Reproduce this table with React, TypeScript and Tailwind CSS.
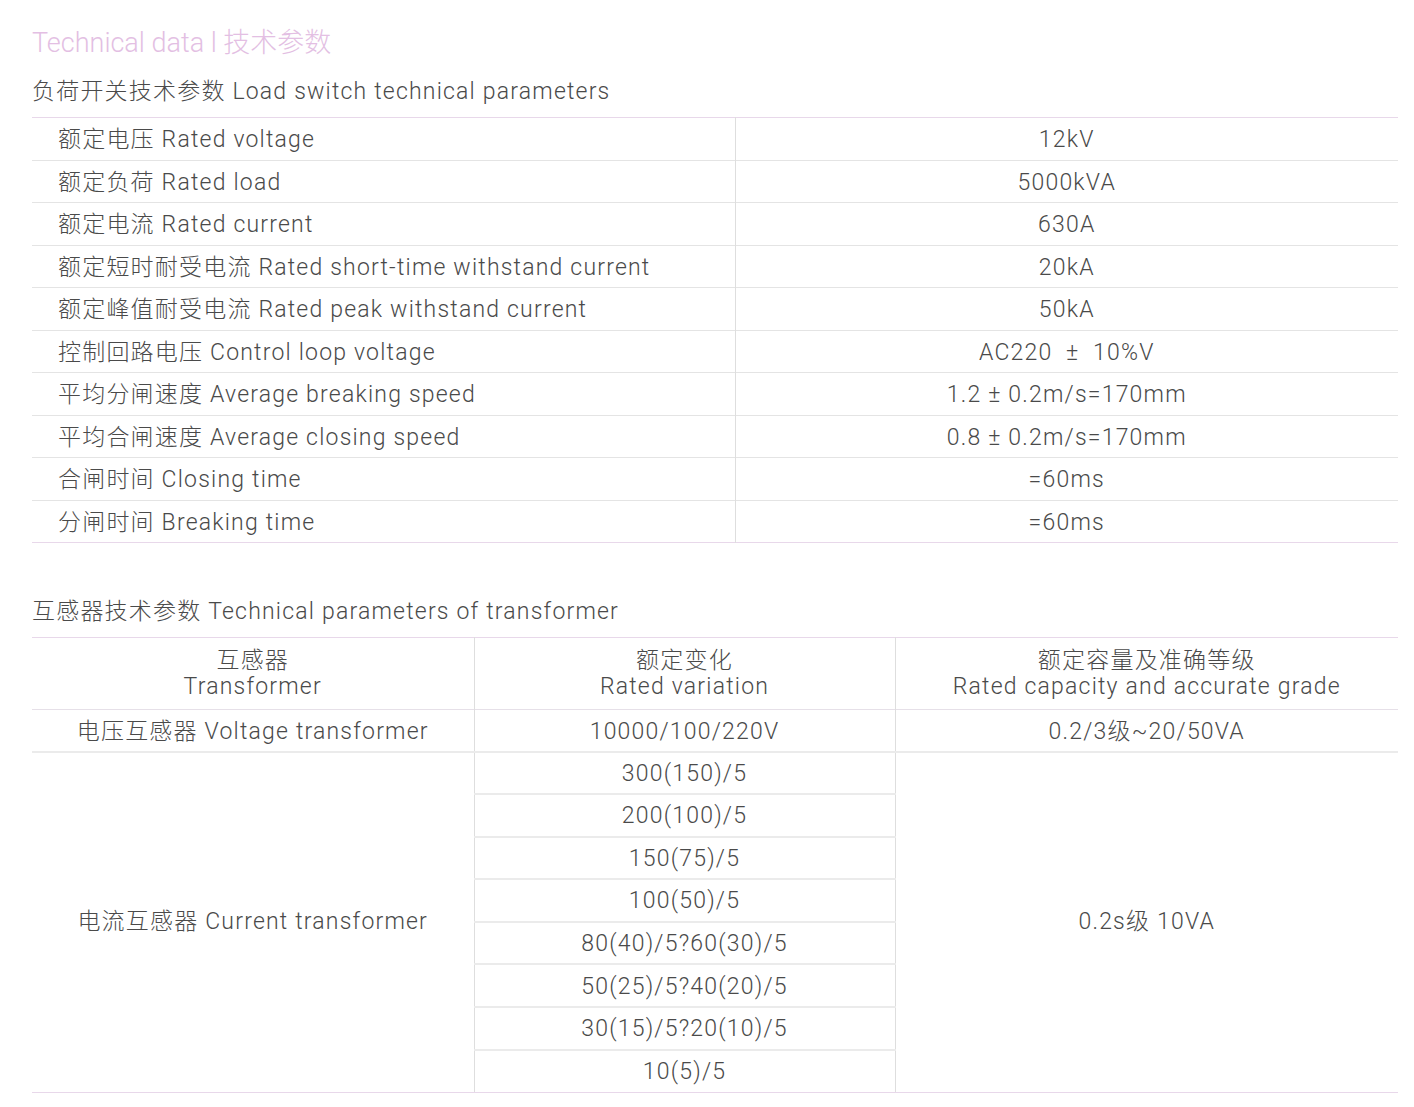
const font = "font-['Roboto','Noto_Sans_CJK_SC',sans-serif] font-light"

const loadRows: [string, string][] = [
  ["额定电压 Rated voltage", "12kV"],
  ["额定负荷 Rated load", "5000kVA"],
  ["额定电流 Rated current", "630A"],
  ["额定短时耐受电流 Rated short-time withstand current", "20kA"],
  ["额定峰值耐受电流 Rated peak withstand current", "50kA"],
  ["控制回路电压 Control loop voltage", "AC220\u00a0 ± \u00a010%V"],
  ["平均分闸速度 Average breaking speed", "1.2 ± 0.2m/s=170mm"],
  ["平均合闸速度 Average closing speed", "0.8 ± 0.2m/s=170mm"],
  ["合闸时间 Closing time", "=60ms"],
  ["分闸时间 Breaking time", "=60ms"],
]

const ratios = [
  "300(150)/5",
  "200(100)/5",
  "150(75)/5",
  "100(50)/5",
  "80(40)/5?60(30)/5",
  "50(25)/5?40(20)/5",
  "30(15)/5?20(10)/5",
  "10(5)/5",
]

export default function App() {
  return (
    <div className={`${font} bg-white min-h-screen text-[#4a4a4a] pl-8 pr-4 pt-[26px] pb-4`}>
      <h1 className="text-[27px] leading-[34px] text-[#e3bfe3]">Technical data l 技术参数</h1>

      <h2 className="text-[23px] tracking-[1.2px] leading-[34px] mt-[15px] mb-[8px]">
        负荷开关技术参数 Load switch technical parameters
      </h2>
      <table className="w-full border-collapse text-[23px] tracking-[1.2px]">
        <tbody>
          {loadRows.map(([label, value], i) => (
            <tr
              key={i}
              className={
                "h-[42.5px] " +
                (i === 0 ? "border-t border-t-[#e8d8ea] " : "") +
                (i === loadRows.length - 1 ? "border-b border-b-[#e8d8ea]" : "border-b border-b-[#e4e4e4]")
              }
            >
              <td className="w-[703px] pl-[26px] pt-[3px] border-r border-r-[#dedede]">{label}</td>
              <td className="text-center pt-[3px]">{value}</td>
            </tr>
          ))}
        </tbody>
      </table>

      <h2 className="text-[23px] tracking-[1.2px] leading-[34px] mt-[52px] mb-[8px]">
        互感器技术参数 Technical parameters of transformer
      </h2>
      <table className="w-full border-collapse text-[23px] tracking-[1.2px] text-center">
        <tbody>
          <tr className="h-[72px] border-t border-t-[#e8d8ea] border-b border-b-[#e6e0e8]">
            <td className="w-[442px] border-r border-r-[#dedede] leading-[26px]">
              互感器
              <br />
              Transformer
            </td>
            <td className="w-[421px] border-r border-r-[#dedede] leading-[26px]">
              额定变化
              <br />
              Rated variation
            </td>
            <td className="leading-[26px]">
              额定容量及准确等级
              <br />
              Rated capacity and accurate grade
            </td>
          </tr>
          <tr className="h-[42px] border-b-2 border-b-[#ebebeb]">
            <td className="border-r border-r-[#dedede] pt-[3px]">电压互感器 Voltage transformer</td>
            <td className="border-r border-r-[#dedede] pt-[3px]">10000/100/220V</td>
            <td className="pt-[3px]">0.2/3级~20/50VA</td>
          </tr>
          {ratios.map((r, i) => (
            <tr
              key={r}
              className={
                "h-[42.6px] " +
                (i === ratios.length - 1 ? "border-b border-b-[#e8d8ea]" : "border-b-2 border-b-[#ebebeb]")
              }
            >
              {i === 0 && (
                <td rowSpan={ratios.length} className="border-r border-r-[#dedede] border-b border-b-[#e8d8ea]">
                  电流互感器 Current transformer
                </td>
              )}
              <td className="border-r border-r-[#dedede] pt-[2px]">{r}</td>
              {i === 0 && (
                <td rowSpan={ratios.length} className="border-b border-b-[#e8d8ea]">
                  0.2s级 10VA
                </td>
              )}
            </tr>
          ))}
        </tbody>
      </table>
    </div>
  )
}
